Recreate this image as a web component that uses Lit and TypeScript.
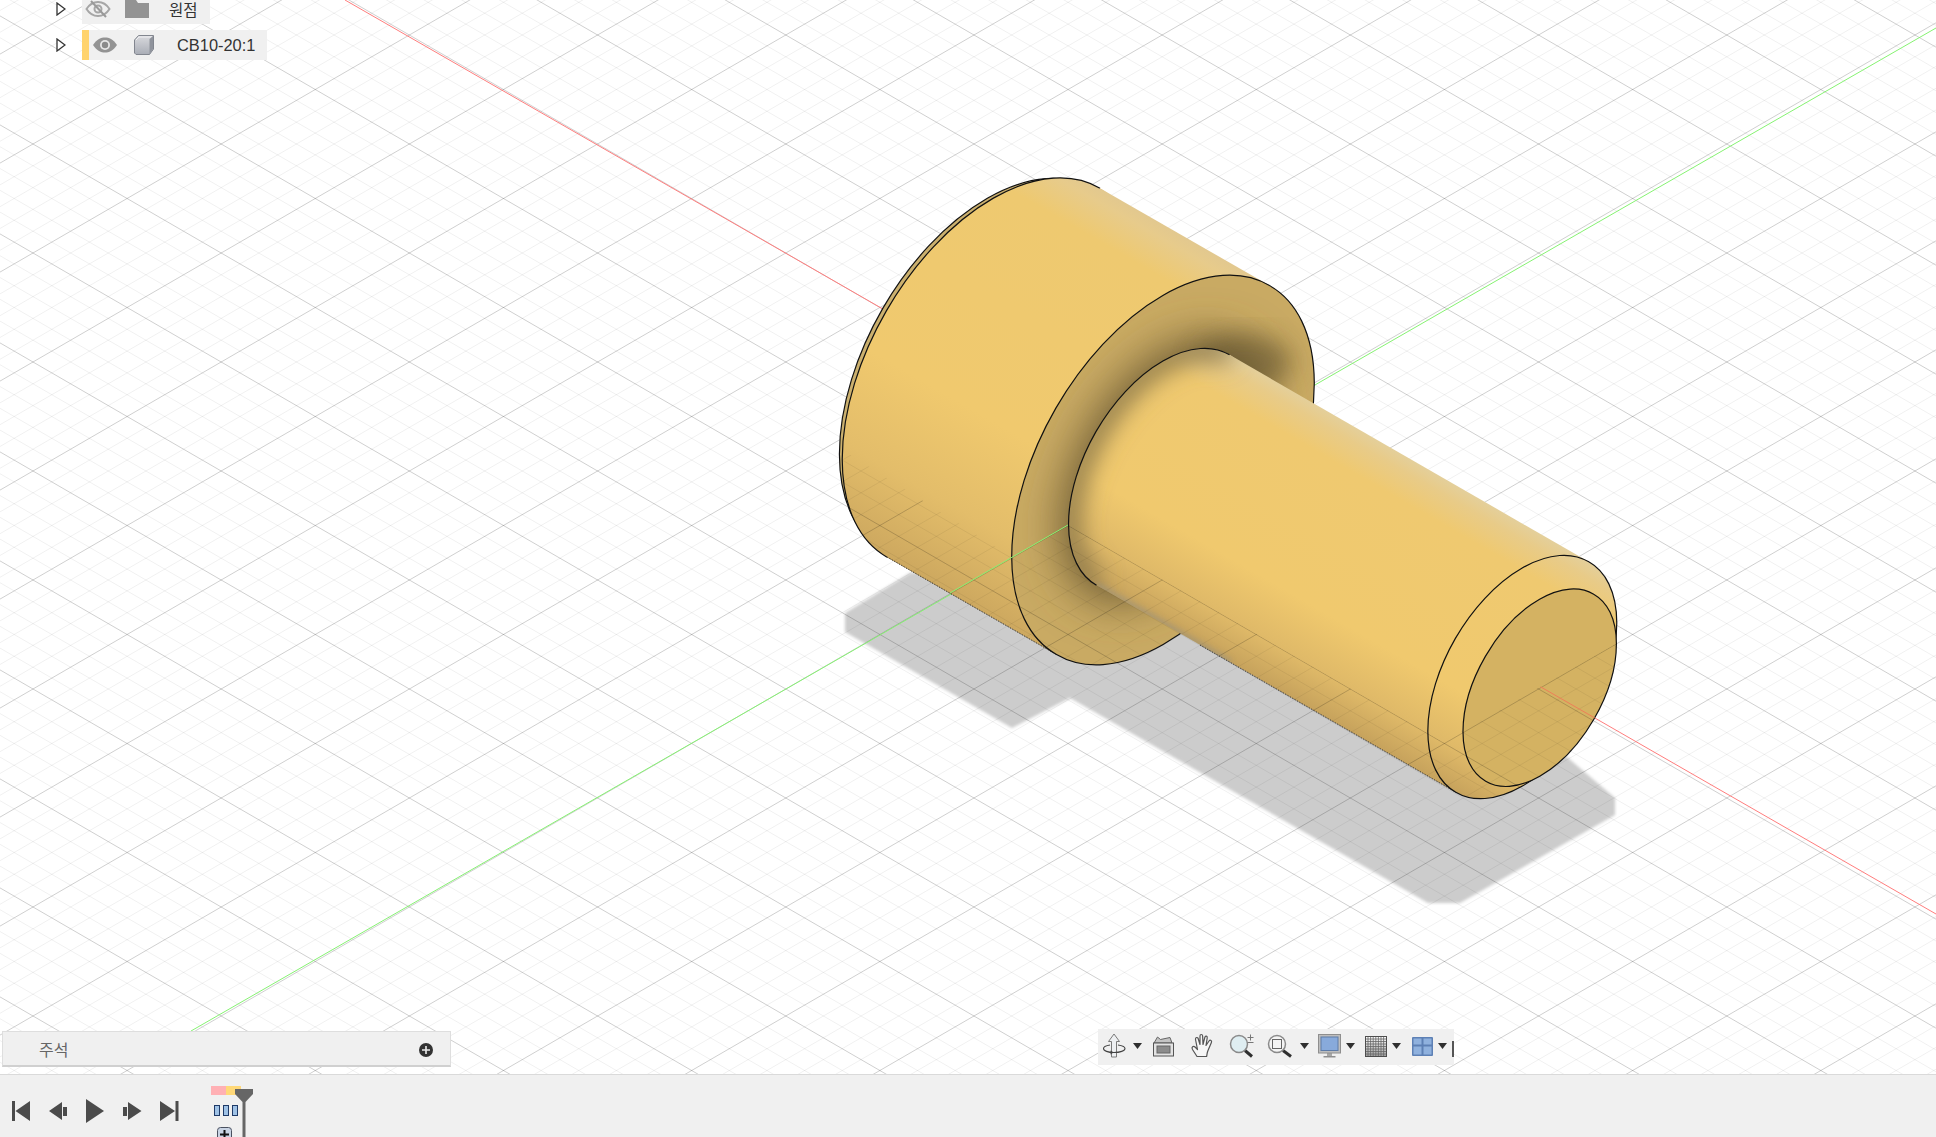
import { LitElement, css, html, svg } from "lit";
import { customElement } from "lit/decorators.js";

const W = 1936;
const H = 1074;

// isometric grid, crossing measured at (33,144), 94.1 x 54.5 per major cell
const SLOPE = 54.5 / 94.1;
const MAJOR = 109;

function gridPath(major: boolean) {
  let d = "";
  const step = MAJOR / 5;
  for (const dir of [1, -1]) {
    const base = 144 - dir * SLOPE * 33;
    for (let n = -60; n < 120; n++) {
      if ((n % 5 === 0) !== major) continue;
      const y0 = base + n * step;
      const y1 = y0 + dir * SLOPE * W;
      if (Math.max(y0, y1) < 0 || Math.min(y0, y1) > H) continue;
      d += `M0 ${y0.toFixed(1)}L${W} ${y1.toFixed(1)}`;
    }
  }
  return d;
}

const MINOR_D = gridPath(false);
const MAJOR_D = gridPath(true);

// circles around the red axis project to ellipses turned 60deg, minor = .577 major.
// Written as arcs, a rotate() would also turn the userSpaceOnUse gradients.
function halfD(cx: number, cy: number, a: number) {
  const dx = a * 0.5;
  const dy = a * 0.866;
  return `M${cx + dx} ${cy - dy}A${a} ${a * 0.577} -60 1 0 ${cx - dx} ${cy + dy}`;
}

function ellD(cx: number, cy: number, a: number) {
  const dx = a * 0.5;
  const dy = a * 0.866;
  return `${halfD(cx, cy, a)}A${a} ${a * 0.577} -60 1 0 ${cx + dx} ${cy - dy}Z`;
}

function ell(cx: number, cy: number, a: number, cls: string) {
  return svg`<path class=${cls} d=${ellD(cx, cy, a)}></path>`;
}

function half(cx: number, cy: number, a: number, cls: string) {
  return svg`<path class=${cls} d=${halfD(cx, cy, a)}></path>`;
}

const BACK = { x: 993.5, y: 372.7 };
const FLANGE = { x: 1163, y: 470 };
const CAP = { x: 1522.3, y: 677 };
const FACE = { x: 1539.7, y: 687.7 };
const HEAD_R = 213;
const SHAFT_R = 133;

function band(a: { x: number; y: number }, b: { x: number; y: number }, r: number) {
  const dx = r * 0.5;
  const dy = r * 0.866;
  return `${a.x + dx},${a.y - dy} ${b.x + dx},${b.y - dy} ${b.x - dx},${b.y + dy} ${a.x - dx},${a.y + dy}`;
}

function groundLines() {
  return svg`
    <path class="minor" d=${MINOR_D}></path>
    <path class="major" d=${MAJOR_D}></path>`;
}

function scene() {
  return svg`<svg class="scene" width=${W} height=${H} viewBox="0 0 ${W} ${H}">
    <defs>
      <linearGradient id="headFill" gradientUnits="userSpaceOnUse" x1="1269.5" y1="285.5" x2="1056.5" y2="654.5">
        <stop offset="0" stop-color="#e2c88f"></stop>
        <stop offset=".03" stop-color="#e7cb8b"></stop>
        <stop offset=".11" stop-color="#eec970"></stop>
        <stop offset=".6" stop-color="#f0c96e"></stop>
        <stop offset=".82" stop-color="#e3bd6a"></stop>
        <stop offset="1" stop-color="#cda85f"></stop>
      </linearGradient>
      <linearGradient id="shaftFill" gradientUnits="userSpaceOnUse" x1="1229.5" y1="355" x2="1096.5" y2="585">
        <stop offset="0" stop-color="#e4cf9a"></stop>
        <stop offset=".05" stop-color="#e8cb88"></stop>
        <stop offset=".15" stop-color="#efc970"></stop>
        <stop offset=".66" stop-color="#f0c96e"></stop>
        <stop offset=".86" stop-color="#dfb968"></stop>
        <stop offset="1" stop-color="#c6a25c"></stop>
      </linearGradient>
      <filter id="blur4" x="-30%" y="-30%" width="160%" height="160%"><feGaussianBlur stdDeviation="3"></feGaussianBlur></filter>
      <filter id="blur12" x="-30%" y="-30%" width="160%" height="160%"><feGaussianBlur stdDeviation="12"></feGaussianBlur></filter>
      <filter id="blur22" x="-50%" y="-50%" width="200%" height="200%"><feGaussianBlur stdDeviation="22"></feGaussianBlur></filter>
      <clipPath id="flangeClip">${ell(FLANGE.x, FLANGE.y, HEAD_R, "")}</clipPath>
      <clipPath id="shaftClip">
        ${ell(FLANGE.x, FLANGE.y, SHAFT_R, "")}
        <polygon points=${band(FLANGE, CAP, SHAFT_R)}></polygon>
      </clipPath>
      <clipPath id="bodyClip">
        ${ell(BACK.x, BACK.y, HEAD_R, "")}
        ${ell(FLANGE.x, FLANGE.y, HEAD_R, "")}
        <polygon points=${band(BACK, FLANGE, HEAD_R)}></polygon>
        <polygon points=${band(FLANGE, CAP, SHAFT_R)}></polygon>
        ${ell(CAP.x, CAP.y, SHAFT_R, "")}
        ${ell(FACE.x, FACE.y, 108, "")}
      </clipPath>
      <clipPath id="belowGround">
        <polygon points="800,423 1012,557 1068,525 1443,742 1617,643 1700,900 800,900"></polygon>
      </clipPath>
    </defs>

    <polygon class="shadow" points="845,613 845,632 1012,728 1070,698 1428,903 1460,903 1615,815 1615,798 1500,700 1100,560 910,573"></polygon>
    ${groundLines()}
    <line class="red" x1="345" y1="0" x2="1936" y2="914"></line>
    <line class="green" x1="191" y1="1031" x2="1936" y2="28"></line>

    <!-- head -->
    ${ell(BACK.x - 6, BACK.y - 3.5, 208.5, "rim")}
    ${ell(BACK.x, BACK.y, HEAD_R, "headSide")}
    ${half(BACK.x, BACK.y, HEAD_R, "edge")}
    <polygon class="headSide" points=${band(BACK, FLANGE, HEAD_R)}></polygon>
    <line class="dotted" x1="887" y1="557" x2="1056.5" y2="654.5"></line>

    <!-- flange face with the dark fillet around the shaft -->
    ${ell(FLANGE.x, FLANGE.y, HEAD_R, "flange")}
    <g clip-path="url(#flangeClip)">
      <g filter="url(#blur22)">${ell(FLANGE.x, FLANGE.y, SHAFT_R + 12, "fillet")}</g>
      <ellipse class="filletDark" cx="1244" cy="362" rx="48" ry="28" filter="url(#blur12)"></ellipse>
    </g>
    ${ell(FLANGE.x, FLANGE.y, HEAD_R, "edge")}

    <!-- shaft -->
    ${ell(FLANGE.x, FLANGE.y, SHAFT_R, "shaftSide")}
    <polygon class="shaftSide" points=${band(FLANGE, CAP, SHAFT_R)}></polygon>
    <g clip-path="url(#shaftClip)">
      <g filter="url(#blur12)">${half(FLANGE.x, FLANGE.y, SHAFT_R, "shaftShade")}</g>
      <line class="shaftFuzz" x1="1096" y1="585" x2="1230" y2="663" filter="url(#blur4)"></line>
    </g>
    ${half(FLANGE.x, FLANGE.y, SHAFT_R, "edge")}
    <line class="dotted" x1="1200" y1="645" x2="1455.5" y2="792"></line>

    <!-- end of the shaft -->
    ${ell(CAP.x, CAP.y, SHAFT_R, "shaftSide edge")}
    ${ell(FACE.x, FACE.y, 108, "face edge")}

    <!-- the ground plane shows through the part of the body below it -->
    <g clip-path="url(#belowGround)">
      <g clip-path="url(#bodyClip)">
        ${groundLines()}
        <line class="redOn" x1="345" y1="0" x2="1936" y2="914"></line>
      </g>
    </g>
    <line class="green" x1="1068" y1="525" x2="950" y2="593"></line>
  </svg>`;
}

const eyeOpen = svg`<svg width="26" height="18" viewBox="0 0 26 18">
  <path fill="#939393" d="M1 9C5 3 9 1.500 13 1.500S21 3 25 9C21 15 17 16.500 13 16.500S5 15 1 9Z"></path>
  <circle cx="13" cy="9" r="5" fill="#e6e6e6"></circle>
  <circle cx="13" cy="9" r="3.200" fill="#8a8a8a"></circle>
</svg>`;

const eyeOff = svg`<svg width="26" height="18" viewBox="0 0 26 18">
  <path fill="none" stroke="#a6a6a6" stroke-width="2" d="M1.500 9C5 3.500 9 2 13 2S21 3.500 24.500 9C21 14.500 17 16 13 16S5 14.500 1.500 9Z"></path>
  <circle cx="13" cy="9" r="3.500" fill="none" stroke="#a6a6a6" stroke-width="2"></circle>
  <line x1="6" y1="1" x2="21" y2="17" stroke="#9a9a9a" stroke-width="2"></line>
</svg>`;

const folder = svg`<svg width="24" height="18" viewBox="0 0 24 18">
  <path fill="#939393" d="M0 0H11L13 3H24V18H0Z"></path>
</svg>`;

const cube = svg`<svg width="22" height="22" viewBox="0 0 22 22">
  <defs><linearGradient id="cubeFront" x1="0" y1="0" x2="0" y2="1">
    <stop offset="0" stop-color="#d9dade"></stop><stop offset="1" stop-color="#a9adb6"></stop>
  </linearGradient></defs>
  <path fill="#c6c8ce" d="M5.500 4.500 9 1H20.500L16 4.500Z"></path>
  <path fill="url(#cubeFront)" stroke="#82868f" stroke-width="1" d="M1.500 6 5.500 1.500H20.500V15L16.500 20.500H3L1.500 19Z"></path>
  <path fill="none" stroke="#f0f0f2" d="M3 6 6 3H19"></path>
  <path fill="#8f939c" d="M16.500 5 20 2V15L16.500 20Z"></path>
</svg>`;

const arrow = svg`<svg class="arrow" width="10" height="14" viewBox="0 0 10 14">
  <path fill="#fff" stroke="#333" stroke-width="1.300" d="M1 1 9 7 1 13Z"></path>
</svg>`;

function navCell(w: number, body: unknown) {
  return svg`<svg width=${w} height="36" viewBox="0 0 ${w} 36">${body}</svg>`;
}

const caret = navCell(13, svg`<path fill="#2f2f2f" d="M2 14H11L6.500 20Z"></path>`);

const orbitIcon = navCell(33, svg`
  <path fill="#eef0f2" stroke="#7a7a7a" stroke-width="1" d="M16 5 21.500 12.500H18.500V28H13.500V12.500H10.500Z"></path>
  <path fill="none" stroke="#444" stroke-width="1.100" d="M12 16C8 16.700 5.500 18 5.500 19.500C5.500 21.800 10 23.500 16 23.500C22 23.500 27 21.800 27 19.500C27 18 24.500 16.700 20 16"></path>
  <path fill="#444" d="M12.500 21.500 15.500 23.500 12.500 25.500Z"></path>`);

const boxIcon = navCell(38, svg`
  <path fill="#c4c4c4" stroke="#666" d="M10 14 13.500 8 16.500 10.500 26 8.500 28 14Z"></path>
  <rect x="9.500" y="14" width="20" height="13" fill="#e3e3e3" stroke="#555"></rect>
  <rect x="13" y="17" width="13" height="7" fill="#8c8c8c" stroke="#666"></rect>`);

const handIcon = navCell(40, svg`
  <path fill="#f6f6f6" stroke="#555" stroke-width="1.200" stroke-linejoin="round" d="M15 27.500 10.500 20.500C9 18 11.500 16.500 13 18L15.500 20.500 13.500 10.500C13.200 8.200 15.800 7.800 16.200 9.800L18 15.500 18 7C18 5 20.500 5 20.600 7L21 15.500 22.800 8.500C23.300 6.400 25.500 6.900 25.200 9L24 16.500 27 12C28.200 10.500 30.200 11.500 29.400 13.400L25.800 22C25 24 25 26 24.600 27.500Z"></path>`);

const zoomPlusIcon = navCell(40, svg`
  <line x1="23" y1="21.500" x2="30" y2="27.500" stroke="#2f2f2f" stroke-width="3"></line>
  <circle cx="17" cy="15" r="8.500" fill="#dfeef2" stroke="#8a8a8a" stroke-width="1.500"></circle>
  <path fill="none" stroke="#777" d="M25.500 8.500H31.500M28.500 5.500V11.500M25.500 13.500H31.500"></path>`);

const zoomWindowIcon = navCell(36, svg`
  <line x1="21" y1="21.500" x2="29" y2="27.500" stroke="#2f2f2f" stroke-width="3"></line>
  <circle cx="15" cy="15" r="8.500" fill="#f4f4f4" stroke="#8a8a8a" stroke-width="1.500"></circle>
  <rect x="10.500" y="10.500" width="9" height="9" fill="#f4f4f4" stroke="#666"></rect>`);

const monitorIcon = navCell(33, svg`
  <rect x="16" y="24" width="5" height="3" fill="#a8a8a8"></rect>
  <rect x="12.500" y="27" width="12" height="1.500" fill="#8f8f8f"></rect>
  <rect x="7.500" y="5.500" width="22" height="18.500" fill="#bdbdbd" stroke="#8e8e8e"></rect>
  <rect x="10" y="8" width="17" height="13.500" fill="#88aadb" stroke="#5e7ca8"></rect>`);

const gridCells = [0, 1, 2, 3, 4, 5, 6];
const gridIcon = navCell(33, svg`
  <defs><linearGradient id="gridFade" x1="0" y1="0" x2="0" y2="1">
    <stop offset="0" stop-color="#ffffff"></stop><stop offset="1" stop-color="#a0a0a0"></stop>
  </linearGradient></defs>
  <rect x="8.500" y="7.500" width="21" height="20" fill="url(#gridFade)" stroke="#4d4d4d"></rect>
  ${gridCells.map((i) => svg`<path stroke="#666" stroke-width=".8" d="M${11 + i * 2.6} 8V27M9 ${10 + i * 2.5}H29"></path>`)}`);

const viewsIcon = navCell(33, svg`
  <rect x="9" y="8" width="21" height="19" rx="1" fill="#5d80b5"></rect>
  <rect x="10.500" y="9.500" width="8" height="6" fill="#8fb1de"></rect>
  <rect x="20.500" y="9.500" width="8" height="6" fill="#8fb1de"></rect>
  <rect x="10.500" y="17.500" width="8" height="8" fill="#8fb1de"></rect>
  <rect x="20.500" y="17.500" width="8" height="8" fill="#8fb1de"></rect>`);

const navBar = navCell(5, svg`<rect x="3" y="12" width="2" height="16" fill="#555"></rect>`);

const NAV_CELLS = [
  orbitIcon, caret, boxIcon, handIcon, zoomPlusIcon, zoomWindowIcon, caret,
  monitorIcon, caret, gridIcon, caret, viewsIcon, caret, navBar,
];

function playerIcon(d: string) {
  return svg`<svg width="19" height="26" viewBox="0 0 19 26"><path fill="#4b4b4b" d=${d}></path></svg>`;
}

const PLAYER = [
  "M0 3H3V23H0ZM3.500 13 18 3V23Z",
  "M0 13 13 4V22ZM14 9H18V18H14Z",
  "M0 1 18 13 0 25Z",
  "M0 9H4V18H0ZM5 4 18.500 13 5 22Z",
  "M0 3 15 13 0 23ZM15.500 3H18.500V23H15.500Z",
];

@customElement("app-root")
export class AppRoot extends LitElement {
  static styles = css`
    :host {
      display: block;
      width: 1936px;
      height: 1137px;
      overflow: hidden;
      font-family: "Liberation Sans", "Noto Sans CJK KR", sans-serif;
    }
    .page {
      display: flex;
      flex-direction: column;
      height: 100%;
    }
    .viewport {
      position: relative;
      flex: 1;
      background: #fff;
      overflow: hidden;
    }
    .scene {
      position: absolute;
      inset: 0;
    }
    .minor {
      fill: none;
      stroke: rgba(0, 0, 0, 0.06);
    }
    .major {
      fill: none;
      stroke: rgba(0, 0, 0, 0.19);
    }
    .red {
      stroke: #ff7d7d;
    }
    .redOn {
      stroke: #ee7f58;
    }
    .green {
      stroke: #86f272;
    }
    .shadow {
      fill: #cccccc;
      filter: blur(1.6px);
    }
    .edge {
      fill: none;
      stroke: #111;
      stroke-width: 1.2;
    }
    .rim {
      fill: #cbb06e;
      stroke: #111;
      stroke-width: 1.2;
    }
    .headSide {
      fill: url(#headFill);
    }
    .shaftSide {
      fill: url(#shaftFill);
    }
    .shaftSide.edge {
      fill: url(#shaftFill);
    }
    .flange {
      fill: #c9aa63;
    }
    .fillet {
      fill: #705d35;
    }
    .filletDark {
      fill: #62522e;
      opacity: 0.6;
    }
    .shaftShade {
      fill: none;
      stroke: #8a7748;
      stroke-width: 22;
    }
    .shaftFuzz {
      stroke: #8f8e84;
      stroke-width: 5;
      opacity: 0.7;
    }
    .dotted {
      stroke: #222;
      stroke-width: 1;
      stroke-dasharray: 1 1;
    }
    .face.edge {
      fill: #d4b262;
    }
    .tree {
      position: absolute;
      left: 57px;
      top: -6px;
      display: flex;
      flex-direction: column;
      gap: 6px;
    }
    .row {
      display: flex;
      align-items: center;
      height: 30px;
    }
    .arrow {
      margin-right: 15px;
      margin-left: -1px;
    }
    .cells {
      display: flex;
      align-items: center;
      height: 30px;
      margin-left: 1px;
      background: #f0f0f0;
    }
    .swatch {
      width: 7px;
      height: 30px;
      background: #ffd36e;
    }
    .origin .eye {
      margin: 0 14px 0 3px;
      display: flex;
    }
    .part .eye {
      margin: 0 15px 0 3px;
      display: flex;
    }
    .folder {
      display: flex;
      align-self: flex-end;
      margin-bottom: 6px;
    }
    .cube {
      display: flex;
    }
    .label {
      color: #333;
    }
    .origin .label {
      font-size: 15.500px;
      padding: 0 12px 1px 20px;
    }
    .part .label {
      font-size: 16.400px;
      padding: 1px 12px 0 22px;
    }
    .notes {
      position: absolute;
      left: 2px;
      top: 1031px;
      box-sizing: border-box;
      width: 449px;
      height: 36px;
      display: flex;
      align-items: center;
      justify-content: space-between;
      padding: 0 17px 0 36px;
      background: #f0f0f0;
      border: 1px solid #dedede;
      border-bottom: 2px solid #d0d0d0;
      color: #666;
      font-size: 16px;
    }
    .notes svg {
      display: block;
      margin-top: 3px;
    }
    .nav {
      position: absolute;
      left: 1098px;
      top: 1029px;
      display: flex;
      height: 36px;
      background: #f0f0f0;
    }
    .nav svg {
      display: block;
    }
    .timeline {
      box-sizing: border-box;
      flex: none;
      height: 63px;
      display: flex;
      background: #f0f0f0;
      border-top: 1px solid #dadada;
      overflow: hidden;
    }
    .player {
      display: flex;
      align-items: center;
      gap: 18px;
      height: 26px;
      margin: 23px 0 0 12px;
    }
    .player svg {
      display: block;
    }
    .track {
      position: relative;
      width: 44px;
      margin-left: 32px;
      padding-top: 11px;
    }
    .marks {
      display: flex;
      height: 9px;
    }
    .mark-done {
      width: 15px;
      background: #ffb0b4;
    }
    .mark-now {
      width: 15px;
      background: #ffd878;
    }
    .feature {
      display: flex;
      gap: 3px;
      margin: 10px 0 0 3px;
    }
    .feature span {
      box-sizing: border-box;
      width: 6px;
      height: 11px;
      background: #9fc2e6;
      border: 1.500px solid #1e3a68;
    }
    .add {
      display: block;
      margin: 11px 0 0 6px;
    }
    .head {
      position: absolute;
      left: 24px;
      top: 14px;
    }
  `;

  render() {
    return html`<div class="page">
      <div class="viewport">
        ${scene()}
        <div class="tree">
          <div class="row origin">
            ${arrow}
            <div class="cells">
              <span class="eye">${eyeOff}</span>
              <span class="folder">${folder}</span>
              <span class="label">원점</span>
            </div>
          </div>
          <div class="row part">
            ${arrow}
            <div class="cells">
              <span class="swatch"></span>
              <span class="eye">${eyeOpen}</span>
              <span class="cube">${cube}</span>
              <span class="label">CB10-20:1</span>
            </div>
          </div>
        </div>
        <div class="notes">
          <span>주석</span>
          <svg width="14" height="14" viewBox="0 0 14 14">
            <circle cx="7" cy="7" r="7" fill="#333"></circle>
            <path stroke="#eee" stroke-width="1.600" d="M3 7H11M7 3V11"></path>
          </svg>
        </div>
        <div class="nav">${NAV_CELLS}</div>
      </div>
      <div class="timeline">
        <div class="player">${PLAYER.map((d) => playerIcon(d))}</div>
        <div class="track">
          <div class="marks"><span class="mark-done"></span><span class="mark-now"></span></div>
          <div class="feature"><span></span><span></span><span></span></div>
          <svg class="add" width="15" height="15" viewBox="0 0 15 15">
            <rect x=".5" y=".5" width="14" height="14" rx="3" fill="#c9d4e4" stroke="#4a5160"></rect>
            <path stroke="#111" stroke-width="2" d="M3 7.500H12M7.500 3V12"></path>
          </svg>
          <svg class="head" width="18" height="50" viewBox="0 0 18 50">
            <path fill="#666" d="M0 0H18V5L10.500 13V50H7.500V13L0 5Z"></path>
          </svg>
        </div>
      </div>
    </div>`;
  }
}
